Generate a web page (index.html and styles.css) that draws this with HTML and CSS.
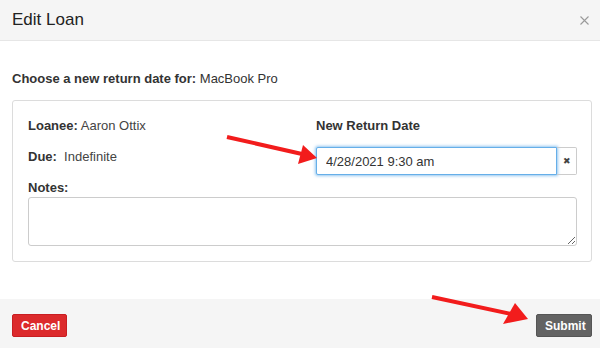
FILE: index.html
```html
<!DOCTYPE html>
<html lang="en">
<head>
    <meta charset="UTF-8">
    <meta name="viewport" content="width=device-width, initial-scale=1.0">
    <title>Edit Loan</title>
    <link rel="stylesheet" href="styles.css">
</head>
<body>
    <div class="modal">
        <div class="modal-header">
            <h4 class="modal-title">Edit Loan</h4>
            <button class="close" aria-label="Close">
                <svg width="9" height="9" viewBox="0 0 9 9"><path d="M0.5 0.5 L8.5 8.5 M8.5 0.5 L0.5 8.5" stroke="#9a9a9a" stroke-width="1.1" fill="none"/></svg>
            </button>
        </div>

        <div class="modal-body">
            <p class="intro"><b>Choose a new return date for:</b> MacBook Pro</p>

            <div class="panel">
                <div class="cols">
                    <div class="col-left">
                        <p class="field"><b>Loanee:</b> Aaron Ottix</p>
                        <p class="field"><b>Due:</b>&nbsp; Indefinite</p>
                    </div>
                    <div class="col-right">
                        <label class="label" for="returnDate">New Return Date</label>
                        <div class="input-group">
                            <input type="text" id="returnDate" class="date-input" value="4/28/2021 9:30 am">
                            <span class="addon">&#x2716;</span>
                        </div>
                    </div>
                </div>
                <label class="label notes-label" for="notes">Notes:</label>
                <textarea id="notes" class="notes"></textarea>
            </div>
        </div>

        <div class="modal-footer">
            <button class="btn btn-cancel">Cancel</button>
            <button class="btn btn-submit">Submit</button>
        </div>
    </div>

    <!-- annotation arrows -->
    <svg class="arrows" width="600" height="348" viewBox="0 0 600 348">
        <line x1="227" y1="137" x2="302" y2="154" stroke="#f21c1c" stroke-width="4"/>
        <polygon points="317,158 303,145 298,164" fill="#f21c1c"/>
        <line x1="432" y1="297" x2="511" y2="314" stroke="#f21c1c" stroke-width="4"/>
        <polygon points="528,319 515,303 503,324" fill="#f21c1c"/>
    </svg>
</body>
</html>
```

FILE: styles.css
```css
body {
    margin: 0;
    font-family: "Liberation Sans", Arial, sans-serif;
    font-size: 13px;
    color: #333;
    background: #fff;
}
.modal {
    width: 600px;
    height: 348px;
    display: flex;
    flex-direction: column;
}
.modal-header {
    height: 40px;
    padding: 0 10px 0 12px;
    background-color: #f5f5f5;
    border-bottom: 1px solid #e6e6e6;
    display: flex;
    justify-content: space-between;
    align-items: center;
}
.modal-title {
    margin: 0;
    font-size: 17px;
    font-weight: normal;
    color: #222;
}
.close {
    border: none;
    background: none;
    padding: 0;
    width: 9px;
    height: 9px;
    margin-right: 1px;
    display: flex;
    cursor: pointer;
}
.modal-body {
    padding: 30px 8px 0 12px;
    flex: 1;
}
.intro {
    margin: 0 0 13px;
    line-height: 16px;
}
.panel {
    border: 1px solid #dcdcdc;
    border-radius: 3px;
    padding: 16px 14px 15px 15px;
}
.cols {
    display: grid;
    grid-template-columns: 274px 1fr;
    column-gap: 14px;
}
.field {
    margin: 0 0 13px;
    line-height: 18px;
    color: #444;
}
.field:last-child {
    margin-bottom: 0;
}
.field b {
    color: #333;
}
.label {
    display: block;
    font-weight: bold;
    line-height: 18px;
}
.input-group {
    display: flex;
    margin-top: 12px;
    height: 28px;
}
.date-input {
    flex: 1;
    min-width: 0;
    box-sizing: border-box;
    height: 28px;
    margin: 0;
    padding: 0 9px;
    font-family: inherit;
    font-size: 13px;
    color: #333;
    border: 1px solid #66afe9;
    border-radius: 2px 0 0 2px;
    box-shadow: 0 0 3px 1px rgba(102, 175, 233, 0.7);
    outline: none;
}
.addon {
    width: 20px;
    box-sizing: border-box;
    border: 1px solid #ccc;
    border-left: none;
    border-radius: 0 2px 2px 0;
    display: flex;
    align-items: center;
    justify-content: center;
    font-size: 9px;
    color: #444;
}
.notes-label {
    margin-top: 4px;
}
.notes {
    display: block;
    box-sizing: border-box;
    width: 549px;
    height: 49px;
    margin: 0;
    border: 1px solid #ccc;
    border-radius: 3px;
    font-family: inherit;
    font-size: 13px;
}
.modal-footer {
    height: 49px;
    padding: 15px 8px 0 12px;
    box-sizing: border-box;
    background-color: #f5f5f5;
    display: flex;
    justify-content: space-between;
    align-items: flex-start;
}
.btn {
    height: 23px;
    padding: 0 8px;
    border-radius: 2px;
    font-family: inherit;
    font-size: 12px;
    font-weight: bold;
    color: #fff;
    cursor: pointer;
}
.btn-cancel {
    width: 55px;
    background-color: #dc2a2c;
    border: 1px solid #c81e22;
}
.btn-submit {
    width: 56px;
    background-color: #636363;
    border: 1px solid #555;
}
.arrows {
    position: absolute;
    left: 0;
    top: 0;
    pointer-events: none;
}
```
